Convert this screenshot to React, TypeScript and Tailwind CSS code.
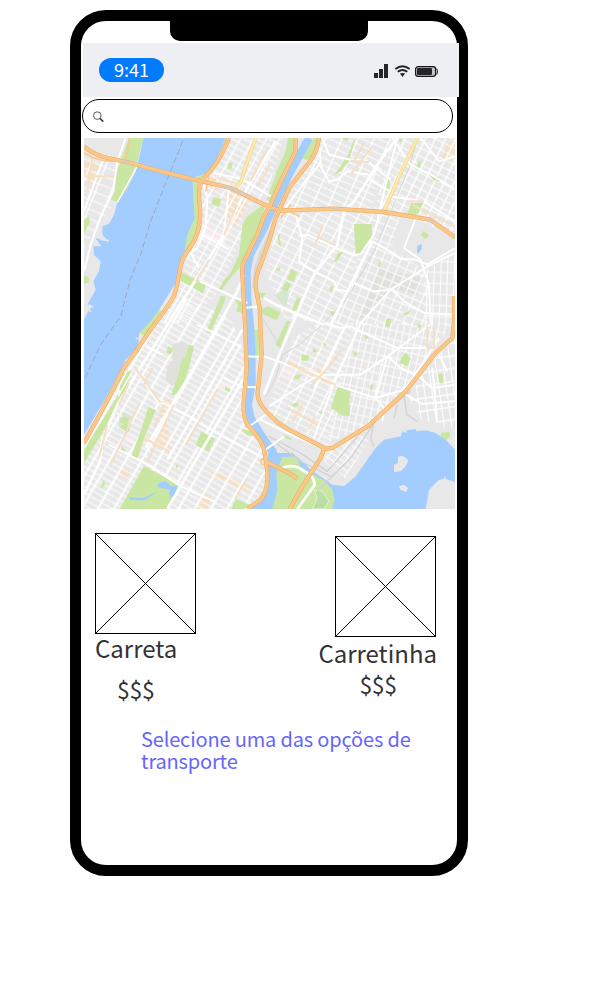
import React from "react";

type Grid = { id: string; angle: number; w: number; h: number; street: number; avenue: number; area: string };

/* The map is drawn in a 1113 x 1113 space; each grid fills one district with its street blocks. */
const grids: Grid[] = [
  { id: "nj", angle: 22, w: 44, h: 27, street: 3, avenue: 4, area: "M0 30L125 65L95 195L50 250L0 330Z" },
  { id: "uptown", angle: 29, w: 34, h: 18, street: 3, avenue: 4, area: "M430 0H600L550 160L475 230L475 300L400 470L300 555H235L300 390L350 240L345 130Z" },
  { id: "harlem", angle: 30, w: 42, h: 17, street: 3, avenue: 6, area: "M300 480L440 540L480 640V800L548 950L545 1050L490 1113H0V930L110 725L215 555Z" },
  { id: "bx1", angle: 24, w: 44, h: 20, street: 3, avenue: 4, area: "M710 0H925L860 220H585L640 130Z" },
  { id: "bx2", angle: 27, w: 38, h: 20, street: 3, avenue: 4, area: "M590 225H870L750 560L600 540L545 400Z" },
  { id: "bx3", angle: 26, w: 27, h: 22, street: 3, avenue: 4, area: "M925 0H1113V290L900 222H870Z" },
  { id: "bx4", angle: 22, w: 26, h: 25, street: 3, avenue: 3, area: "M870 225L960 240V360L1030 400V560H750Z" },
  { id: "bx5", angle: 2, w: 20, h: 33, street: 3, avenue: 3, area: "M1020 400L1113 345V560H1020Z" },
  { id: "bx6", angle: 26, w: 38, h: 18, street: 3, avenue: 4, area: "M630 600L700 555H810L735 925L555 830L560 780Z" },
  { id: "bx7", angle: 13, w: 20, h: 27, street: 3, avenue: 3, area: "M810 555H1105L960 760L850 860L725 920Z" },
  { id: "bx8", angle: -8, w: 22, h: 38, street: 4, avenue: 3, area: "M1055 645L1113 600V870L1065 868L1055 850L1015 850L975 780Z" },
  { id: "port", angle: 36, w: 25, h: 18, street: 3, avenue: 3, area: "M725 940L810 880L855 905L785 1020L720 970Z" },
];

const water = [
  "M178 0H425L400 60L370 105L325 120L328 180L332 240L310 290L300 350L288 390L278 430L262 455L225 515L200 550L165 585V605L160 630L125 665L105 710L60 790L0 890V545L10 525L25 505L10 500L35 455L28 430L45 400L50 370L30 350L28 325L52 325L34 300L75 312L55 290V265L75 258L90 230L100 195L130 150L155 100L170 40Z",
  "M555 915L575 930L580 945H625L655 970L680 995L745 1040L780 1045L815 1015L875 930L900 905L950 895L955 880L967 885V877L995 873L997 880L1025 877L1055 885L1085 905L1113 935V1113H500L548 1060L552 960Z",
];

const parks = [
  "M135 0H178L160 70L130 150L100 193L80 185L97 105Z",
  "M0 245L15 235L18 250L0 290Z",
  "M0 412L15 420L16 432L0 438Z",
  "M425 0H440L350 125L348 230L330 300L298 355L310 290L330 235L325 125L370 100L400 60Z",
  "M433 76L445 74L443 92L432 93Z",
  "M387 177L412 182L406 208L382 198Z",
  "M490 235L545 195L520 290L470 385L435 425L412 458L402 458L418 430L440 405L465 350L475 260Z",
  "M410 475H425L420 495L378 585L367 582Z",
  "M292 402L365 440L358 467L290 428Z",
  "M170 555L205 512L232 518L200 570L190 600L160 580Z",
  "M612 0H632L636 35L595 120L557 190L548 185L580 95L605 40Z",
  "M660 50L690 0H703L692 45L673 66L655 62Z",
  "M775 0H795L790 8L780 6Z",
  "M795 45L805 15L815 0L795 70L770 100L745 115L765 92Z",
  "M905 128L917 123L917 155L905 165Z",
  "M948 0L955 3L953 12L944 10Z",
  "M1002 72L1013 69L1006 94L997 96Z",
  "M1030 105L1065 118L1066 132L1048 125Z",
  "M982 195L1018 194L1000 234L970 229Z",
  "M1017 279L1036 292L1024 303L1010 292Z",
  "M810 258H864L863 303L845 330L825 350H815Z",
  "M762 344L779 340L757 372L748 374Z",
  "M581 290L588 288L587 310L594 325L583 320Z",
  "M578 389L590 388L586 398H576Z",
  "M621 394L640 402L628 432L609 425Z",
  "M607 430L622 440L609 461L592 453Z",
  "M640 478L651 482L638 520L622 518Z",
  "M535 510L555 505L590 523L578 546L535 528Z",
  "M740 445L749 444L744 459H735Z",
  "M887 370L892 374L888 386H881Z",
  "M958 527L980 516L972 529L962 533Z",
  "M908 542L922 544L916 569L903 563Z",
  "M740 520L755 521L748 532L738 526Z",
  "M520 462L545 466L535 480L520 476Z",
  "M453 482L475 488V525L457 520L462 505Z",
  "M315 620L330 624L320 670L298 745L270 772L262 768L285 705L288 678L305 650Z",
  "M193 808L216 816L184 890L163 955L155 966L142 955L170 880Z",
  "M252 625L268 632L260 650L246 643Z",
  "M117 835L138 841L128 862L143 858L132 884L107 868L119 858L105 852Z",
  "M112 926L128 940L112 938Z",
  "M352 881L393 902L374 942L335 922Z",
  "M180 984L287 1042L250 1113H107Z",
  "M58 1027L65 1037L53 1050H48Z",
  "M275 978L284 983L276 993Z",
  "M425 746L440 754L436 762L422 756Z",
  "M470 872L500 878L510 895L490 892Z",
  "M455 1083L497 1100L480 1113H442Z",
  "M0 935L100 775L110 710L145 695L125 760L90 820L55 885L0 975Z",
  "M510 575H524V655H511Z",
  "M575 620L608 548L620 550L588 630Z",
  "M655 648L676 653L671 669L651 667Z",
  "M630 713L653 709L645 724L630 722Z",
  "M686 633L698 635L696 645L687 642Z",
  "M716 613L728 618L722 628Z",
  "M945 674L964 643L980 662L970 684Z",
  "M842 589L855 591L852 602H843Z",
  "M809 642L822 645L817 655H810Z",
  "M858 742L867 738L864 757L857 755Z",
  "M762 745L799 755V780H796L798 833L778 834L740 810Z",
  "M700 819L720 823L715 832Z",
  "M622 800L640 792L645 802L630 808Z",
  "M603 891L624 902L620 906L600 898Z",
  "M1071 885L1095 881L1100 895L1087 905L1070 900Z",
  "M1062 708H1075L1078 736H1067Z",
  "M1000 555L1010 560V572L1001 568Z",
];

const tan = [
  "M0 75L30 70L55 90L30 100L50 125L15 140L0 110Z",
  "M378 120L405 115L395 165L378 150Z",
  "M430 155L500 180L455 265L420 240Z",
  "M1070 65L1090 15L1113 10V45L1095 75Z",
  "M235 790L270 780L250 855L260 945L185 910L178 893L225 895Z",
  "M110 980L137 1000L130 1025L103 1012Z",
  "M383 1002L400 1002L505 1050L500 1062L375 1012Z",
  "M350 1065L385 1072L370 1113H335Z",
  "M612 668L760 736L755 748L605 680Z",
  "M705 680L722 685L715 725L680 745Z",
];

const avenues = [
  "M0 1070L48 970L55 905L100 800L200 640L345 410L415 295L490 150L575 10",
  "M185 930L330 690L460 460L480 410",
  "M250 965L330 830L475 575",
  "M250 1113L480 720",
];

const roads = [
  "M125 0L100 70L88 160L50 235L20 320L0 400",
  "M0 220L40 110L60 60",
  "M350 288L435 335M347 430L490 495M388 105L470 122L560 175",
  "M358 140L370 180L365 270L340 330L320 345L345 390",
  "M435 150L420 280L410 320",
  "M75 920L200 985L290 1045L390 1090",
  "M320 840L425 900L540 960M185 625L235 650M340 560L470 625",
  "M420 720L480 750M245 800L345 850",
  "M150 685L220 790L245 800",
  "M705 75L735 130L760 125L790 100L855 110L855 125L920 160L915 175L1020 190L1113 250",
  "M705 15L710 75L660 135L600 215",
  "M715 0L735 50L800 65L850 70L920 125",
  "M635 230L655 300L645 370L690 400L750 430L760 455L790 460",
  "M925 0L980 80L1050 115L1113 155M1010 0L1065 70L1113 55",
  "M1000 230L960 330L1010 365L1035 440L1040 555",
  "M645 295L670 290L755 330L810 352L830 348L870 290L910 120L940 0",
  "M865 310L910 335L950 362L995 365L1030 380L1113 330",
  "M1113 345L1040 380L920 455L830 555",
  "M810 435L870 460L925 455L960 490L1020 525L1113 530",
  "M780 570L700 730L690 760",
  "M830 555L750 735L690 900",
  "M540 655L610 680L700 710L765 745L875 780L960 755L980 730L1065 600",
  "M555 805L640 750L705 710L830 710L910 655L1045 555",
  "M720 555L770 570L800 565L850 590L940 630H1050",
  "M530 845L620 890L725 935",
  "M910 655L950 690L1010 720L1055 760",
  "M910 655L875 780L900 810L895 850",
  "M545 935L600 895M1045 690L1060 850",
  "M1045 750L1113 740M965 770L1015 798L1113 790M1060 640L1090 700",
  "M480 510L530 505M484 655L545 657M490 747L520 748M500 862L560 820",
];

const wideRoads = [
  "M940 0L900 50L855 120L810 190L780 220L760 320L690 410L650 500L590 640L540 770",
  "M865 310L780 480L740 560",
  "M540 480L585 505L720 560",
];

const highways = [
  "M0 25Q30 52 80 62L140 75L250 105L345 128L440 150L500 180L558 208L590 218L750 212L900 222L1040 245L1113 298",
  "M435 0C410 60 390 90 360 120C340 145 345 170 347 200C355 270 335 310 310 340C280 375 290 430 267 480C240 525 200 570 160 635C130 675 110 700 95 740L50 825L0 915",
  "M635 0V40L600 110L557 205L540 235L520 290L480 370Q473 385 475 410L483 555L488 690L480 780Q475 830 490 860Q540 910 543 950L550 1000Q553 1060 530 1085L490 1113",
  "M705 0Q700 45 670 80L615 150L575 240L555 310L528 385Q512 420 516 455L527 510L533 650L522 755Q515 785 545 818L580 853L615 875L720 930",
  "M617 1113L655 1045L710 960L720 933L745 930L855 862L965 760L1055 645L1105 600L1110 555V475",
  "M545 970L615 1005L640 1022",
];

const rail = [
  "M555 895L650 945L730 1000L860 850M700 1060L800 960L880 840L980 760M575 915L650 970L740 1015",
  "M870 850L860 900L870 925M940 800L930 840M960 770L968 830L1000 850",
];

function CityMap() {
  return (
    <svg viewBox="0 0 1113 1113" className="block size-[371px]" fill="none">
      <defs>
        {grids.map((g) => (
          <pattern key={g.id} id={g.id} width={g.w} height={g.h} patternUnits="userSpaceOnUse" patternTransform={`rotate(${g.angle})`}>
            <path d={`M0 3H${g.w}`} stroke="#fff" strokeWidth={g.street} />
            <path d={`M4 0V${g.h}`} stroke="#fff" strokeWidth={g.avenue} />
          </pattern>
        ))}
      </defs>
      <path d="M0 0H1113V1113H0Z" fill="#e8e8e8" />
      <g fill="#e0e1dc">
        <path d="M885 390L1015 420L1000 470L920 450L860 530L825 545Z" />
        <path d="M105 820L150 830L140 870L105 880Z" />
      </g>
      <g fill="#f5e9ec">
        <path d="M355 245L425 290L425 320L395 325L345 295Z" />
        <path d="M600 680L635 690L620 723L595 708Z" />
        <path d="M410 730L445 735L440 755L405 745ZM130 890L155 900L145 920L125 910Z" />
      </g>
      <g fill="#f4e0c8">
        {tan.map((d) => <path key={d} d={d} />)}
      </g>
      {grids.map((g) => <path key={g.id} d={g.area} fill={`url(#${g.id})`} />)}
      <path d="M265 620Q300 600 315 625L290 685L285 725L262 745L245 725L250 685L265 670Z" fill="#e0e1dc" />
      <path d="M945 240L1015 250L1100 300L1070 355L1030 365L950 350L925 330Z" fill="#e8e8e8" />
      <path d="M570 470L600 455L615 470L605 510Z" fill="#d4e8d0" />
      <g fill="#c9e6a2">
        {parks.map((d) => <path key={d} d={d} />)}
      </g>
      <g fill="#a3ccff">
        {water.map((d) => <path key={d} d={d} />)}
        <path d="M1000 325L1012 317L1014 330L1003 347L999 342ZM225 1035L245 1028L260 1045L280 1045L270 1075L255 1078L258 1055L220 1048ZM132 1078L180 1080L220 1060L185 1087L140 1086Z" />
      </g>
      <path d="M675 0L620 100L570 200L540 270L498 350L488 400L490 480L498 560L503 650L503 740L492 800L500 840L530 890L565 940" stroke="#a3ccff" strokeWidth="24" />
      <path d="M595 957L635 955L650 985L680 1005L725 1030L745 1055L752 1085L745 1113H565L580 1055L577 1005Z" fill="#c9e6a2" />
      <path d="M690 1055L715 1060L735 1090L720 1113H685L700 1080Z" fill="#b9e0a0" stroke="#e4f4d6" strokeWidth="3" />
      <g fill="#e8e8e8">
        <path d="M942 957Q955 947 973 967Q970 983 950 1000L930 1003V980L942 975Z" />
        <path d="M945 1045L960 1040L972 1050L967 1062L950 1056Z" />
        <path d="M1025 1113L1035 1055L1065 1025L1080 1022L1082 1012L1085 1022L1113 1033V1113Z" />
      </g>
      <path d="M50 305L75 307M15 500L28 508M0 505L22 522M155 600L170 605M135 660L125 668" stroke="#e8e8e8" strokeWidth="4" />
      <g strokeLinejoin="round">
        <path d="M1000 0L975 90L870 340L790 480L720 555L640 625L595 650L575 720L545 775M535 540L595 635" stroke="#d6d6d6" strokeWidth="3" />
        <g stroke="#d2d2d2" strokeWidth="4">
          {rail.map((d) => <path key={d} d={d} />)}
        </g>
        <path d="M560 280L530 345L512 400L510 450" stroke="#d9d9d9" strokeWidth="9" />
      </g>
      <g stroke="#fff" strokeWidth="8" strokeLinejoin="round">
        {avenues.map((d) => <path key={d} d={d} />)}
        {wideRoads.map((d) => <path key={d} d={d} />)}
        <path d="M640 1113L675 1065L692 1040Q690 1010 660 1000Q630 975 595 990" />
      </g>
      <g stroke="#fff" strokeWidth="6" strokeLinejoin="round">
        {roads.map((d) => <path key={d} d={d} />)}
        <path d="M100 193L165 75M145 700L105 770M128 700L105 745V775" strokeWidth="4" />
      </g>
      <g stroke="#f5dfc6" strokeWidth="6">
        <path d="M0 115H90M25 60L10 160M500 130L550 30M520 145L558 80M400 120L470 140M375 365L335 430M460 200L420 290" />
        <path d="M150 685L230 795M180 740L205 690M165 800L80 980M135 735L105 800M70 860L45 960M400 755L305 920M270 800L190 970M180 900L255 940M490 1020L455 1080M240 800L210 870" />
        <path d="M865 25L800 110M840 15L810 70M800 68L855 72M985 200L1113 265M970 190L1020 190M715 265L690 330M700 295L755 322" />
        <path d="M610 675L755 740M775 630L740 680L680 745M610 810L700 860M655 800L625 850M695 835L675 875M1030 565V630H1050V570" />
      </g>
      <path d="M297 8L255 110L200 250L170 350L140 420L110 535L50 620L0 728" stroke="#a1a9b2" strokeWidth="3" strokeDasharray="18 9" />
      <g strokeLinejoin="round">
        <path d="M1000 0L950 105L900 218M515 0L480 100Q475 135 455 150" stroke="#eed08a" strokeWidth="11" />
        <path d="M1000 0L950 105L900 218M515 0L480 100Q475 135 455 150" stroke="#ffe9a8" strokeWidth="8" />
        <path d="M0 45Q40 70 90 70M125 65L137 0M365 160L375 115M600 210L645 235M590 240L620 200M540 962A9 9 0 1 0 540 980" stroke="#f6ca93" strokeWidth="5" />
        <g stroke="#efac64" strokeWidth="13">
          {highways.map((d) => <path key={d} d={d} />)}
        </g>
        <g stroke="#fdcb8c" strokeWidth="9">
          {highways.map((d) => <path key={d} d={d} />)}
        </g>
        <g stroke="#f6bf80" strokeWidth="2">
          {highways.map((d) => <path key={d} d={d} />)}
        </g>
        <path d="M115 69L142 76M415 144L440 150L490 174M745 212H765M1030 245L1050 250" stroke="#d9cbb9" strokeWidth="9" />
      </g>
    </svg>
  );
}

function StatusIcons() {
  return (
    <svg width="66" height="16" viewBox="0 0 66 16" className="mt-[2px] block" fill="none">
      <g fill="#262626">
        <path d="M1 10h4v5H1zM6 6h4v9H6zM11 1h4v14h-4z" />
        <path d="M26.9 10.6Q29.5 9.2 32.1 10.6L29.5 14Z" />
      </g>
      <path d="M22.3 6Q29.5 0.4 36.7 6M24.7 8.8Q29.5 5.2 34.3 8.8" stroke="#262626" strokeWidth="1.8" />
      <rect x="42.6" y="3.6" width="20" height="9.8" rx="2.6" fill="#c4c4c6" stroke="#151515" strokeWidth="1.2" />
      <rect x="44" y="5" width="15" height="7" rx="1.2" fill="#262626" />
      <path d="M63.2 5.7Q64.5 6 64.5 8.5T63.2 11.3" stroke="#333" strokeWidth="1.1" />
    </svg>
  );
}

function Placeholder() {
  return (
    <svg width="101" height="101" viewBox="0 0 101 101" className="block" fill="none" stroke="#000" shapeRendering="crispEdges">
      <rect x="0.5" y="0.5" width="100" height="100" />
      <path d="M0.5 0.5L100.5 100.5M100.5 0.5L0.5 100.5" />
    </svg>
  );
}

export default function App() {
  return (
    <div className="h-[986px] w-[606px] overflow-hidden bg-white pt-[10px] pl-[70px] font-['Noto_Sans_CJK_JP','Noto_Sans_CJK_SC',sans-serif] text-[#333333]">
      <main className="flex h-[866px] w-[398px] flex-col rounded-[36px] border-[11px] border-black bg-white">
        <div className="mx-auto mb-[2px] h-5 w-[198px] shrink-0 rounded-b-[10px] bg-black" />
        <header className="ml-[2px] flex h-[54px] w-[376px] shrink-0 items-center justify-between bg-[#eeeff3] pr-[20px] pl-[16px]">
          <time className="flex h-6 w-[65px] items-center justify-center rounded-full bg-[#007aff] text-[18px] leading-[22px] text-white">
            <span className="pb-[2px]">9:41</span>
          </time>
          <StatusIcons />
        </header>
        <div className="mt-[2px] ml-px flex h-[34px] w-[371px] shrink-0 items-center rounded-[17px] border border-black pl-[10px]">
          <svg width="12" height="12" viewBox="0 0 12 12" fill="none" stroke="#333" className="mt-px">
            <circle cx="4.3" cy="4.6" r="3.8" strokeWidth="0.8" />
            <path d="M7.1 7.5L10.2 10.6" strokeWidth="1.5" />
          </svg>
        </div>
        <div className="mt-[5px] ml-[3px] w-[371px] shrink-0">
          <CityMap />
        </div>
        <section className="flex justify-between pr-[20px] pl-[14px] text-[24px] leading-[30px]">
          <div className="pt-6">
            <Placeholder />
            <h2 className="-mt-px">Carreta</h2>
            <p className="mt-[11px] ml-[22px] text-[23px] tracking-[-0.3px]">$$$</p>
          </div>
          <div className="pt-[27px]">
            <div className="ml-[17px]">
              <Placeholder />
            </div>
            <h2 className="mt-px">Carretinha</h2>
            <p className="mt-px ml-[41px] text-[23px] tracking-[-0.3px]">$$$</p>
          </div>
        </section>
        <p className="mt-[24px] ml-[60px] w-[290px] text-[20px] leading-[22px] tracking-[-0.16px] text-[#6666fa]">
          Selecione uma das opções de transporte
        </p>
      </main>
    </div>
  );
}
